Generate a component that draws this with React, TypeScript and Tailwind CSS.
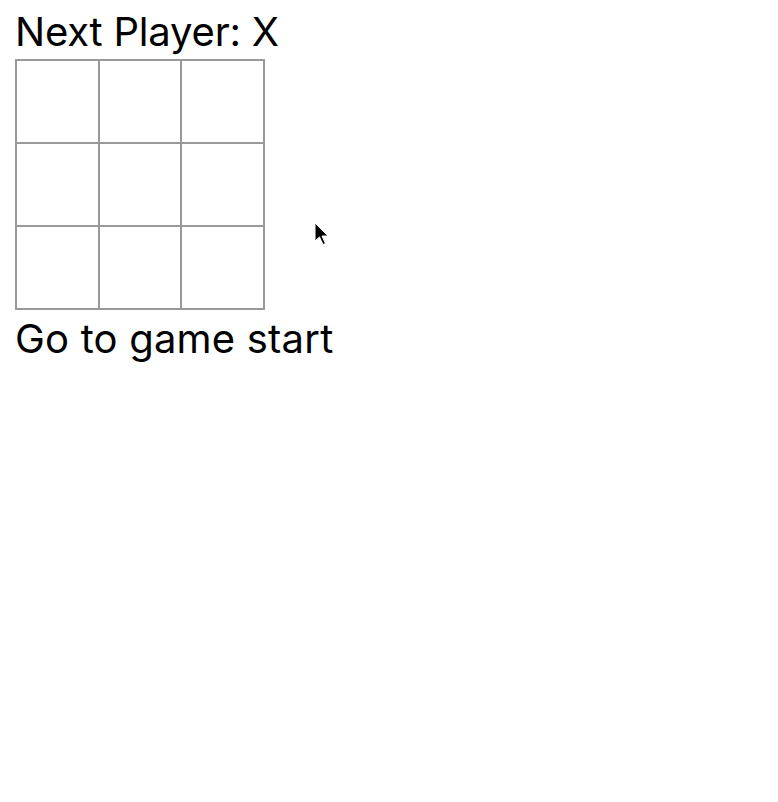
const cells = Array.from({ length: 9 }, (_, i) => i)

export default function App() {
  return (
    <div className="relative min-h-[802px] bg-white px-[15px] pt-[8px] font-['Inter',sans-serif] text-black">
      <div className="text-[40px] leading-[48px] tracking-[-0.2px]">Next Player: X</div>
      <div className="mt-[3px] grid w-[250px] grid-cols-3 gap-[2px] border-2 border-[#999] bg-[#999]">
        {cells.map((i) => (
          <button key={i} className="h-[81px] bg-white" />
        ))}
      </div>
      <ol className="mt-[5px]">
        <li>
          <button className="text-[40px] leading-[48px] tracking-[0.2px]">Go to game start</button>
        </li>
      </ol>
      <svg
        className="absolute left-[314px] top-[222px]"
        width="18"
        height="26"
        viewBox="0 0 18 26"
      >
        <path
          d="M1 1 L1 19 L5.5 15 L9 22.5 L11.5 21.5 L8 14 L14 14 Z"
          fill="#000"
          stroke="#fff"
          strokeWidth="1"
        />
      </svg>
    </div>
  )
}
